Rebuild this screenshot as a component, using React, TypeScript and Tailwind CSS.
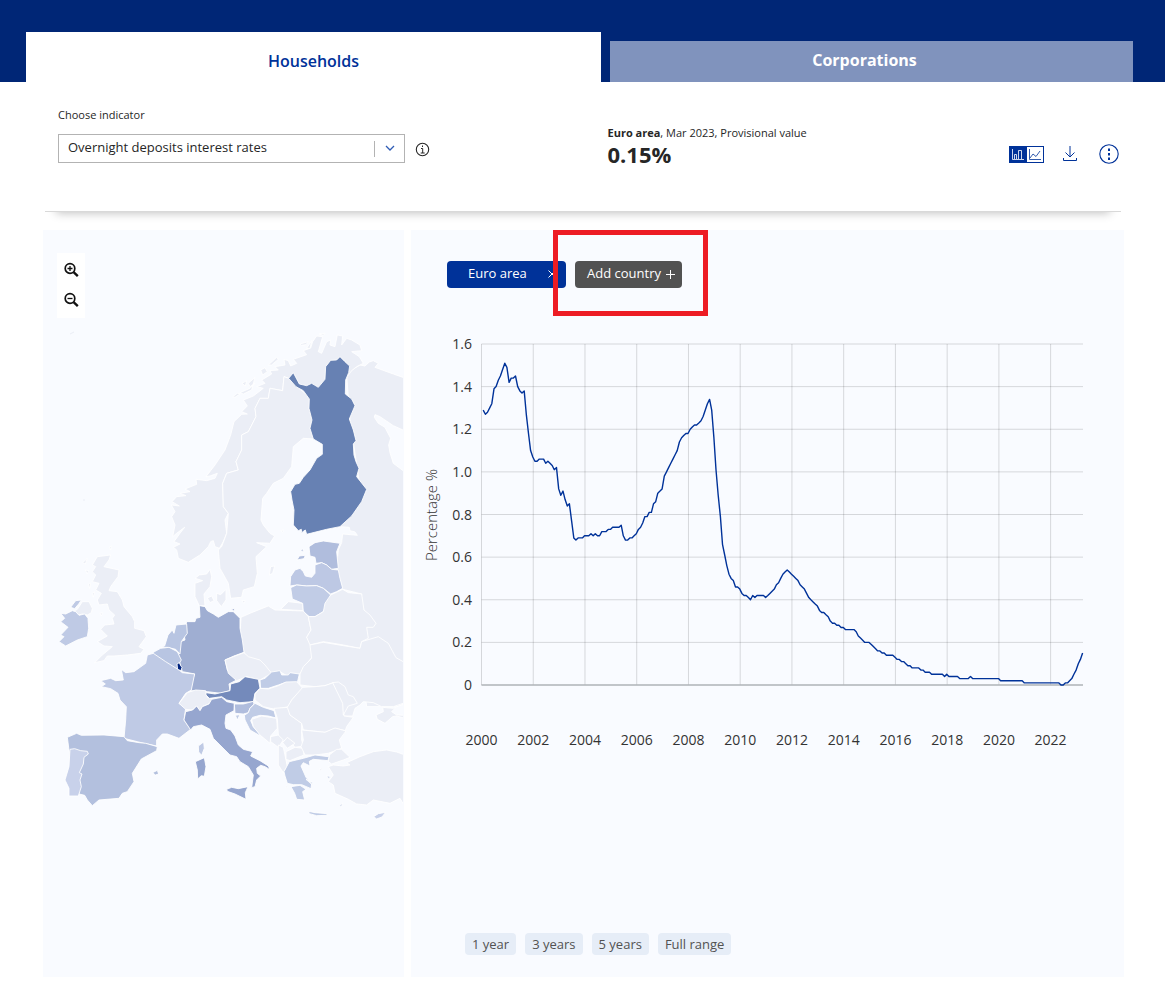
import { useState } from 'react';

const NONE = '#ebeef6';

interface Sheet {
  x: number;
  y: number;
  shapes: { fill: string; d: string }[];
}

// Every sheet is drawn on a 1/3 grid from its own origin
const sheets: Sheet[] = [
  {
    // Nordics, Baltics, Germany, Poland
    x: 160,
    y: 320,
    shapes: [
      { fill: NONE, d: 'M560 165L575 150L600 135L615 138L628 126L640 122L655 130L645 142L700 162L740 176V335L700 317L660 290L645 284L643 292L655 310L675 322L692 355L686 375L690 398L700 430L740 460V1160H620L600 985L605 822L548 808L530 740L535 690L545 668L548 642L592 646L585 636L570 632L568 622L540 620L600 500L570 300Z' },
      { fill: NONE, d: 'M386 175L372 170L368 212L330 205L325 235L300 235L285 265L288 290L265 335L245 345L245 390L228 425L235 450L200 460L188 490L190 560L205 580L195 600L200 640L190 665L178 685L165 680L160 662L152 665L145 680L120 705L85 727L55 715L50 690L40 682L60 672L42 665L60 640L74 622L50 640L38 650L45 615L35 590L45 575L34 555L58 558L36 545L50 530L78 527L60 520L90 515L75 507L110 493L108 478L140 482L165 475L172 460L150 468L138 470L165 435L185 405L195 390L212 345L222 305L245 283L262 282L245 275L262 258L250 240L280 228L310 205L290 200L315 190L305 180L335 162L330 152L355 150L345 140L375 135L372 118L385 122L392 138L410 130L400 118L440 104L430 92L452 84L458 65L470 48L488 50L475 95L485 100L500 65L512 60L510 75L525 80L532 45L548 48L545 75L560 55L575 60L600 75L605 92L575 95L598 110L610 130L590 140L575 152L540 200L490 230Z' },
      { fill: NONE, d: 'M218 230L232 220L240 222L225 232ZM240 218L270 205L285 190L270 200L265 190L285 172L275 210L250 222ZM246 190L260 182L256 198ZM302 150L315 143L322 155L308 165ZM325 135L350 112L355 118L335 135ZM420 72L445 65L438 74L424 76ZM440 85L455 62L450 85ZM478 42L495 40L490 46Z' },
      { fill: NONE, d: 'M386 175L372 170L368 212L330 205L325 235L300 235L285 265L288 290L265 335L245 345L245 390L228 425L235 450L200 460L188 490L190 560L205 580L200 640L185 680L175 690L180 745L205 790L212 835L245 832L250 810L283 800L292 760L288 710L320 680L290 668L330 670L344 648L330 640L310 615L303 600L308 535L320 520L340 490L370 475L395 440L400 380L430 355L460 357L480 300L448 230L408 198Z' },
      { fill: NONE, d: 'M105 775L118 765L140 762L150 748L155 770L150 800L132 822L135 857L118 858L105 830L105 790L128 782ZM142 834L155 828L162 842L150 848ZM170 820L182 824L198 808L198 840L184 860L170 842ZM245 842L256 842L252 850ZM328 765L332 740L344 738L338 760ZM362 632L370 630L368 638ZM362 868L385 845L428 850L430 872Z' },
      { fill: '#6781b3', d: 'M386 175L400 158L418 192L440 197L455 190L475 202L495 178L497 140L512 121L530 120L540 110L555 125L569 138L566 158L557 180L556 222L575 237L585 257L568 297L580 330L588 362L580 372L582 405L588 425L597 445L590 470L620 508L605 545L575 588L540 620L500 628L440 643L436 630L425 638L424 628L415 632L400 615L402 570L396 540L392 515L405 493L418 490L430 472L450 450L470 415L487 403L487 373L460 357L450 325L456 300L447 265L448 237L430 212L408 200Z' },
      { fill: '#b0bddd', d: 'M447 680L465 668L490 663L540 670L530 695L535 745L515 748L500 735L485 728L468 730L465 712L450 708ZM411 720L418 708L436 706L432 716ZM422 692L428 686L431 695Z' },
      { fill: '#bdc8e4', d: 'M390 798L392 770L405 750L420 745L430 755L436 768L455 772L465 760L465 735L485 728L500 735L515 748L535 750L540 775L548 805L530 815L512 822L490 805L470 797L440 798L410 795Z' },
      { fill: '#c1cce6', d: 'M392 803L410 795L440 798L470 797L490 805L512 825L508 840L490 875L465 890L448 890L430 875L428 850L397 837Z' },
      { fill: NONE, d: 'M243 892L270 880L325 858L345 870L430 873L445 890L453 930L440 952L455 972L457 1010L430 1045L420 1062L385 1070L360 1055L335 1060L310 1035L260 1010L252 998L240 950Z' },
      { fill: NONE, d: 'M445 890L465 890L490 875L495 850L512 825L548 808L565 818L605 822L612 870L630 885L648 910L640 922L620 922L625 955L605 965L600 985L550 975L490 965L450 975L440 952L453 930Z' },
      { fill: '#9faed2', d: 'M118 857L135 860L142 872L160 882L175 892L205 875L220 875L235 890L240 895L240 925L247 960L252 997L222 1008L195 1020L202 1050L230 1080L207 1092L210 1112L182 1120L142 1115L92 1112L94 1090L104 1062L67 1055L60 1030L55 1000L62 965L75 960L72 940L80 905L105 905L108 895L120 892ZM214 866L224 866L222 874Z' },
    ],
  },
  {
    // British Isles and Benelux
    x: 44,
    y: 540,
    shapes: [
      { fill: NONE, d: 'M160 50L200 45L195 60L180 80L225 90L222 110L200 140L195 152L220 155L235 180L240 200L265 230L272 245L272 265L300 272L307 290L285 320L300 328L290 340L250 345L210 348L190 348L180 362L152 368L175 345L205 320L180 318L160 305L190 288L170 268L182 255L210 252L205 235L212 225L195 210L190 192L165 195L160 180L172 160L155 150L165 130L145 125L155 105L145 95L155 80L145 75Z' },
      { fill: NONE, d: 'M92 212L100 208L115 185L135 185L145 205L142 218L130 225L115 222L105 225ZM116 68L130 55L124 72ZM124 90L134 92L130 102ZM133 132L140 130L137 145ZM145 160L152 155L148 172ZM168 220L176 218L172 228ZM196 22L202 18L200 30Z' },
      { fill: '#bfcae5', d: 'M50 220L65 222L85 212L95 215L105 226L122 222L132 235L134 265L130 290L100 300L65 318L45 305L60 290L50 285L72 262L50 245L62 235ZM80 202L95 182L112 180L104 192L92 206Z' },
      { fill: '#b8c5e2', d: 'M350 322L362 318L372 285L385 270L390 280L396 255L428 252L430 280L412 305L408 342L395 328L370 322Z' },
      { fill: '#b8c5e2', d: 'M328 337L350 325L375 322L400 335L412 360L402 375L402 388L370 378L345 355L328 345Z' },
    ],
  },
  {
    // Iberia and France
    x: 44,
    y: 660,
    shapes: [
      { fill: '#bfcae5', d: 'M170 62L200 55L215 62L238 60L232 28L245 38L270 35L305 10L310 -15L328 -20L365 5L405 30L415 38L452 42L442 90L425 100L405 130L425 145L420 180L440 208L405 235L370 222L355 222L338 240L338 258L300 250L280 245L240 235L245 180L247 140L228 120L222 100L200 86L172 80L184 72ZM463 258L479 246L481 265L473 286L464 276Z' },
      { fill: '#b3c0de', d: 'M70 232L98 220L112 226L180 225L240 230L250 242L285 248L305 250L340 260L338 272L292 297L265 340L270 365L250 395L235 400L225 415L165 420L145 437L130 420L122 406L105 402L75 270ZM326 338L340 331L344 342L334 345Z' },
      { fill: '#c8d1ea', d: 'M78 268L92 266L110 272L130 274L133 282L120 292L118 312L106 338L114 342L108 360L112 380L103 408L75 408L75 385L63 360L75 320Z' },
      { fill: NONE, d: 'M405 130L430 98L455 90L485 92L490 112L505 118L495 132L475 140L468 152L458 138L445 150L425 148Z' },
      { fill: '#96a6cf', d: 'M454 305L481 293L486 320L481 349L472 347L461 357L460 330Z' },
      { fill: '#00237f', d: 'M399 12L406 8L410 17L414 22L411 32L401 28Z' },
    ],
  },
  {
    // Central Europe, Italy, Balkans and Turkey
    x: 200,
    y: 660,
    shapes: [
      { fill: NONE, d: 'M330 -45L370 -53L430 -43L480 -35L485 -55L535 -70L565 -50L588 -7L615 8V130L580 145L548 142L550 155L528 165L532 178L555 190L578 170L590 168L615 175V128L580 140L545 140L520 128L490 125L480 135L465 145L458 168L430 168L428 150L400 68L375 77L345 80L300 75L300 42L310 20L335 -5Z' },
      { fill: '#f9fbff', d: 'M575 155L590 140L615 132V166L590 165Z' },
      { fill: NONE, d: 'M75 0L100 -10L132 -22L145 -10L180 0L195 15L215 40L180 60L140 50L110 62L85 40Z' },
      { fill: '#748abb', d: 'M18 98L45 102L90 92L92 72L118 65L135 50L175 58L180 85L165 100L160 125L120 128L80 120L65 110L28 115L18 105Z' },
      { fill: '#c0cce6', d: 'M180 60L195 55L215 36L240 32L245 45L265 45L270 38L298 42L292 68L255 68L235 75L205 85L182 85Z' },
      { fill: NONE, d: 'M180 85L205 87L235 77L258 66L290 65L308 85L275 120L265 140L225 148L190 140L165 120L165 102Z' },
      { fill: '#96a6cf', d: 'M-43 155L-22 150L-10 138L0 152L7 140L27 132L35 118L65 112L80 125L103 130L102 152L78 165L75 190L78 205L92 210L105 228L115 255L130 268L158 275L152 288L180 302L205 318L210 329L195 320L182 316L170 325L172 340L182 348L170 360L165 380L155 383L160 345L145 320L120 305L110 290L90 285L60 255L40 235L30 208L5 195L-20 200L-28 210L-48 180ZM80 388L95 382L115 386L144 380L136 398L138 418L105 402L82 394Z' },
      { fill: '#b0bddd', d: 'M103 132L130 132L160 124L162 132L150 145L145 158L130 162L105 160Z' },
      { fill: '#c0cce6', d: 'M133 166L145 158L150 145L165 130L190 142L222 152L228 174L205 168L180 166L158 172L152 182L160 200L188 232L150 210L135 180ZM106 166L120 164L112 180Z' },
      { fill: NONE, d: 'M155 178L185 168L230 175L232 205L212 228L210 250L180 225L160 200Z' },
      { fill: NONE, d: 'M222 145L265 142L270 165L305 190L305 240L310 258L285 262L262 235L250 245L235 225L232 175Z' },
      { fill: NONE, d: 'M212 230L235 225L250 240L235 262L212 245Z' },
      { fill: NONE, d: 'M262 232L285 250L262 265L248 248Z' },
      { fill: NONE, d: 'M235 255L250 262L258 300L262 320L250 338L235 315Z' },
      { fill: NONE, d: 'M258 275L285 262L310 265L312 285L270 302L258 298Z' },
      { fill: NONE, d: 'M308 82L345 80L375 77L400 68L430 110L430 150L432 168L460 172L440 200L436 212L405 205L375 217L310 210L305 190L270 165L262 142L275 120Z' },
      { fill: NONE, d: 'M398 68L415 66L435 80L445 105L460 110L472 130L445 138L430 165L428 130Z' },
      { fill: NONE, d: 'M305 210L375 217L405 204L438 213L418 240L425 265L385 280L345 285L315 285L303 260L310 240Z' },
      { fill: NONE, d: 'M388 285L410 268L425 268L450 292L430 300L395 312L385 305Z' },
      { fill: '#c0cce6', d: 'M252 335L268 305L310 295L345 285L385 290L390 278L384 302L340 298L328 304L330 318L310 308L303 318L318 352L335 372L333 386L305 374L280 374L262 370L255 348ZM273 380L300 376L318 388L308 395L314 420L290 418L284 400ZM318 358L338 368L336 374ZM326 454L345 458L382 461L380 466L350 467L328 461ZM380 347L392 350L386 356ZM419 437L428 429L424 441ZM257 378L262 380L259 384ZM360 325L366 327L362 332Z' },
      { fill: NONE, d: 'M385 320L400 315L430 318L450 315L440 308L480 290L520 275L560 270L590 276L615 285V440L600 415L570 430L520 420L500 435L470 432L445 418L405 400L400 375L385 365L400 345Z' },
      { fill: '#c8d1ea', d: 'M521 470L535 461L557 457L546 471L530 477Z' },
    ],
  },
];

// Monthly values, Jan 2000 - Mar 2023
const rates = [
  1.29, 1.27, 1.28, 1.3, 1.32, 1.39, 1.4, 1.43, 1.45, 1.48, 1.51, 1.49,
  1.42, 1.44, 1.44, 1.45, 1.4, 1.38, 1.37, 1.38, 1.27, 1.18, 1.1, 1.07,
  1.05, 1.05, 1.06, 1.06, 1.06, 1.04, 1.05, 1.04, 1.03, 1.01, 1.02, 0.92,
  0.89, 0.91, 0.87, 0.84, 0.85, 0.77, 0.69, 0.68, 0.69, 0.69, 0.69, 0.7,
  0.7, 0.7, 0.71, 0.7, 0.71, 0.7, 0.7, 0.72, 0.72, 0.72, 0.73, 0.73,
  0.74, 0.74, 0.74, 0.74, 0.75, 0.7, 0.68, 0.68, 0.69, 0.69, 0.7, 0.71,
  0.73, 0.74, 0.76, 0.79, 0.79, 0.81, 0.81, 0.85, 0.86, 0.9, 0.91, 0.92,
  0.98, 1.0, 1.02, 1.04, 1.06, 1.08, 1.1, 1.14, 1.16, 1.17, 1.18, 1.18,
  1.2, 1.21, 1.22, 1.22, 1.23, 1.24, 1.26, 1.29, 1.32, 1.34, 1.29, 1.16,
  1.01, 0.89, 0.79, 0.66, 0.61, 0.56, 0.52, 0.5, 0.49, 0.46, 0.46, 0.45,
  0.43, 0.42, 0.42, 0.41, 0.4, 0.42, 0.41, 0.42, 0.42, 0.42, 0.42, 0.41,
  0.42, 0.43, 0.44, 0.45, 0.47, 0.48, 0.5, 0.52, 0.53, 0.54, 0.53, 0.52,
  0.51, 0.5, 0.49, 0.47, 0.46, 0.45, 0.43, 0.41, 0.4, 0.39, 0.38, 0.37,
  0.35, 0.34, 0.34, 0.33, 0.32, 0.3, 0.29, 0.29, 0.28, 0.28, 0.27, 0.27,
  0.26, 0.26, 0.26, 0.26, 0.26, 0.25, 0.23, 0.22, 0.21, 0.2, 0.2, 0.2,
  0.19, 0.18, 0.17, 0.16, 0.16, 0.15, 0.15, 0.14, 0.14, 0.14, 0.14, 0.13,
  0.12, 0.12, 0.11, 0.11, 0.1, 0.09, 0.09, 0.08, 0.08, 0.08, 0.08, 0.07,
  0.07, 0.06, 0.06, 0.06, 0.05, 0.05, 0.05, 0.05, 0.05, 0.05, 0.04, 0.05,
  0.04, 0.04, 0.04, 0.04, 0.04, 0.03, 0.03, 0.03, 0.03, 0.03, 0.04, 0.03,
  0.03, 0.03, 0.03, 0.03, 0.03, 0.03, 0.03, 0.03, 0.03, 0.03, 0.03, 0.03,
  0.02, 0.02, 0.02, 0.02, 0.02, 0.02, 0.02, 0.02, 0.02, 0.02, 0.02, 0.01,
  0.01, 0.01, 0.01, 0.01, 0.01, 0.01, 0.01, 0.01, 0.01, 0.01, 0.01, 0.01,
  0.01, 0.01, 0.01, 0.01, 0, 0, 0.01, 0.01, 0.02, 0.03, 0.05, 0.07,
  0.1, 0.12, 0.15,
];

const yTicks = ['0', '0.2', '0.4', '0.6', '0.8', '1.0', '1.2', '1.4', '1.6'];
const years = [2000, 2002, 2004, 2006, 2008, 2010, 2012, 2014, 2016, 2018, 2020, 2022];
const ranges = ['1 year', '3 years', '5 years', 'Full range'];

const LEFT = 70.5;
const RIGHT = 672;
const TOP = 14;
const BOTTOM = 355;

const yearX = (year: number) => LEFT + (year - 2000) * 25.87;
const rateY = (rate: number) => BOTTOM - (rate / 1.6) * (BOTTOM - TOP);

function ZoomIcon({ plus }: { plus?: boolean }) {
  return (
    <svg width="16" height="16" viewBox="0 0 16 16" fill="none" stroke="#111" aria-hidden="true">
      <circle cx="7" cy="6.5" r="4.8" strokeWidth="1.7" />
      <path d="M10.6 10.2L14.8 14.2" strokeWidth="2.4" />
      <path d={plus ? 'M4.5 6.5h5M7 4v5' : 'M4.5 6.5h5'} strokeWidth="1.3" />
    </svg>
  );
}

function EuropeMap() {
  return (
    <svg viewBox="43 330 361 500" className="mt-3 block w-full" role="img" aria-label="Map of Europe">
      <defs>
        <clipPath id="map-edge">
          <rect x="43" y="330" width="360" height="500" />
        </clipPath>
      </defs>
      <g clipPath="url(#map-edge)">
        {sheets.map((sheet, i) => (
          <g
            key={i}
            transform={`translate(${sheet.x} ${sheet.y}) scale(0.3333)`}
            stroke="#fff"
            strokeWidth="2.6"
            strokeLinejoin="round"
          >
            {sheet.shapes.map((shape, j) => (
              <path key={j} d={shape.d} fill={shape.fill} />
            ))}
          </g>
        ))}
        <path d="M83 500h2M70 334l4-2" stroke="#ebeef6" />
      </g>
    </svg>
  );
}

function RateChart() {
  const line = rates.map((rate, i) => `${(72.2 + i * 2.156).toFixed(1)},${rateY(rate).toFixed(1)}`).join(' ');

  return (
    <svg viewBox="0 0 713 430" className="block w-full" role="img" aria-label="Overnight deposits interest rates">
      <g stroke="#000" strokeOpacity="0.14">
        {yTicks.map((tick) => (
          <path key={tick} d={`M${LEFT} ${rateY(Number(tick))}H${RIGHT}`} />
        ))}
        {years.map((year) => (
          <path key={year} d={`M${yearX(year)} ${TOP}V${BOTTOM}`} />
        ))}
      </g>
      <path d={`M${LEFT} ${BOTTOM}H${RIGHT}`} stroke="#b5b8bd" strokeWidth="1.5" />
      <g fill="#333" fontSize="14">
        {yTicks.map((tick) => (
          <text key={tick} x="61" y={Math.round(rateY(Number(tick))) + 5} textAnchor="end">
            {tick}
          </text>
        ))}
        {years.map((year) => (
          <text key={year} x={yearX(year)} y="415" textAnchor="middle">
            {year}
          </text>
        ))}
        <text transform="translate(26 185) rotate(-90)" textAnchor="middle" fontSize="15" fontWeight="300">
          Percentage %
        </text>
      </g>
      <polyline points={line} fill="none" stroke="#003299" strokeWidth="1.4" strokeLinejoin="round" />
    </svg>
  );
}

export default function App() {
  const [tab, setTab] = useState('Households');

  return (
    <div className="bg-white pb-2 font-['Open_Sans',sans-serif] text-[#262626]">
      <header className="bg-[#002676] pt-8 pr-8 pl-[26px]">
        <div className="grid grid-cols-[575fr_523fr] items-end gap-[9px]" role="tablist">
          <button
            role="tab"
            aria-selected={tab === 'Households'}
            onClick={() => setTab('Households')}
            className="h-[50px] bg-white pt-2 text-base leading-6 font-semibold text-[#003299]"
          >
            Households
          </button>
          <button
            role="tab"
            aria-selected={tab === 'Corporations'}
            onClick={() => setTab('Corporations')}
            className="h-[41px] bg-[#8093bd] pr-[14px] pb-1 text-base leading-6 font-bold text-white"
          >
            Corporations
          </button>
        </div>
      </header>

      <main className="pr-[41px] pl-[43px]">
        <section className="mr-[3px] ml-[2px] flex h-[130px] justify-between border-b border-[#d9d9d9] pl-[13px] shadow-[0_12px_9px_-11px_rgba(0,0,0,0.25)]">
          <div className="flex-1 pt-6">
            <label htmlFor="indicator" className="block text-[11px] leading-[18px]">
              Choose indicator
            </label>
            <div className="mt-[10px] flex items-center gap-[10px]">
              <div className="relative w-[347px]">
                <select
                  id="indicator"
                  className="h-[29px] w-full appearance-none border border-[#b3b3b3] bg-white pr-10 pb-[2px] pl-[9px] text-[13px]"
                >
                  <option>Overnight deposits interest rates</option>
                </select>
                <span className="pointer-events-none absolute top-[7px] right-[30px] h-4 w-px bg-[#b3b3b3]" />
                <svg
                  className="pointer-events-none absolute top-[11px] right-[10px]"
                  width="10"
                  height="8"
                  viewBox="0 0 10 8"
                  fill="none"
                  stroke="#2f5cb5"
                  strokeWidth="1.3"
                  aria-hidden="true"
                >
                  <path d="M1 1L5 5L9 1" />
                </svg>
              </div>
              <button className="pt-[2px]" aria-label="About this indicator">
                <svg width="15" height="15" viewBox="0 0 15 15" fill="none" stroke="#262626" aria-hidden="true">
                  <circle cx="7.5" cy="7.5" r="6.2" strokeWidth="1.1" />
                  <path d="M6 6.500h1.700V11M5.700 11h4M7.500 3.500v1.500" />
                </svg>
              </button>
            </div>
          </div>

          <div className="flex flex-1 justify-between pt-[42px]">
            <div className="pl-[18px]">
              <p className="text-[11px] leading-[18px]">
                <b>Euro area</b>, Mar 2023, Provisional value
              </p>
              <p className="text-[22px] leading-6 font-bold">0.15%</p>
            </div>
            <div className="flex h-[60px] items-center pr-[2px] text-[#003299]">
              <button className="mr-[18px]" aria-label="Switch chart type">
                <svg width="35" height="17" viewBox="0 0 35 17" fill="none" aria-hidden="true">
                  <rect x="0.5" y="0.5" width="34" height="16" fill="#fff" stroke="#003299" />
                  <path d="M0 0h18v17H0z" fill="#003299" />
                  <path d="M3.5 3v10.5H15M5.5 13V8.5h2V13M9.5 13V4.5h3V13" stroke="#fff" strokeOpacity="0.8" />
                  <path d="M20.5 3v10.5H32M21 12l3-4 3 2.5L31 5" stroke="#003299" strokeOpacity="0.8" />
                </svg>
              </button>
              <button className="mr-[21px]" aria-label="Download">
                <svg width="16" height="16" viewBox="0 0 16 16" fill="none" stroke="currentColor" aria-hidden="true">
                  <path d="M8 0v11M3.5 6.500L8 11L12.500 6.500M1.500 12v2.500h13V12" />
                </svg>
              </button>
              <button aria-label="More options">
                <svg width="20" height="20" viewBox="0 0 20 20" fill="none" stroke="currentColor" aria-hidden="true">
                  <circle cx="10" cy="10" r="9.2" strokeWidth="1.1" />
                  <path d="M10 4.500v2.500M10 9v2.500M10 13.500v2.500" strokeWidth="2" />
                </svg>
              </button>
            </div>
          </div>
        </section>

        <div className="mt-[18px] grid grid-cols-[361fr_713fr] gap-[7px]">
          <section className="bg-[#f9fbff] pt-[23px]">
            <div className="ml-[14px] flex h-[65px] w-7 flex-col items-center gap-[14px] bg-white pt-[9px]">
              <button aria-label="Zoom in">
                <ZoomIcon plus />
              </button>
              <button aria-label="Zoom out">
                <ZoomIcon />
              </button>
            </div>
            <EuropeMap />
          </section>

          <section className="relative bg-[#f9fbff] pt-[31px] pb-[22px]">
            <div className="mb-[42px] flex gap-[9px] pl-9 text-[13px] leading-6 text-white">
              <button className="flex h-[27px] w-[119px] items-center justify-between rounded-[4px] bg-[#003299] pr-[9px] pb-[3px] pl-[21px]">
                Euro area
                <svg className="mt-[2px]" width="10" height="10" viewBox="0 0 10 10" stroke="#fff" aria-hidden="true">
                  <path d="M1.500 1.500L8.500 8.500M8.500 1.500L1.500 8.500" />
                </svg>
              </button>
              <button className="flex h-[27px] w-[107px] items-center justify-between rounded-[4px] bg-[#525252] pr-[7px] pb-[3px] pl-3">
                Add country
                <svg className="mt-[2px]" width="9" height="9" viewBox="0 0 9 9" stroke="#fff" aria-hidden="true">
                  <path d="M0 4.500h9M4.500 0v9" />
                </svg>
              </button>
            </div>
            <div className="pointer-events-none absolute top-0 left-[142px] h-[86px] w-[155px] border-5 border-[#ed1c24]" />

            <RateChart />

            <div className="mt-[173px] flex gap-[9px] pl-[54px]">
              {ranges.map((range) => (
                <button key={range} className="h-[22px] rounded-[4px] bg-[#e6edf7] px-[7px] text-[13px] leading-5 text-[#525252]">
                  {range}
                </button>
              ))}
            </div>
          </section>
        </div>
      </main>
    </div>
  );
}
